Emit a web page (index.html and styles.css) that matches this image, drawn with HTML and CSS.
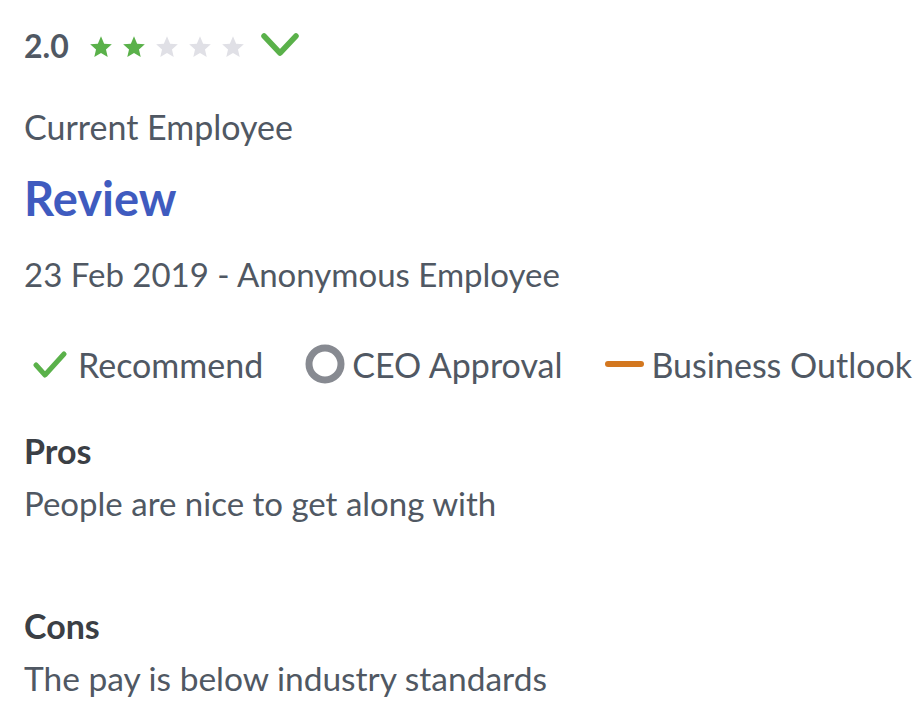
FILE: index.html
```html
<!DOCTYPE html>
<html>
<head>
<meta charset="utf-8">
<link rel="stylesheet" href="styles.css">
</head>
<body>
<div class="review">
  <div class="rating-row">
    <span class="score">2.0</span>
    <span class="stars">
      <svg class="star on" viewBox="0 0 24 24"><path d="M12 2l2.9 6.9 7.1.6-5.4 4.7 1.6 7.1L12 17.6 5.8 21.3l1.6-7.1L2 9.5l7.1-.6z"/></svg>
      <svg class="star on" viewBox="0 0 24 24"><path d="M12 2l2.9 6.9 7.1.6-5.4 4.7 1.6 7.1L12 17.6 5.8 21.3l1.6-7.1L2 9.5l7.1-.6z"/></svg>
      <svg class="star" viewBox="0 0 24 24"><path d="M12 2l2.9 6.9 7.1.6-5.4 4.7 1.6 7.1L12 17.6 5.8 21.3l1.6-7.1L2 9.5l7.1-.6z"/></svg>
      <svg class="star" viewBox="0 0 24 24"><path d="M12 2l2.9 6.9 7.1.6-5.4 4.7 1.6 7.1L12 17.6 5.8 21.3l1.6-7.1L2 9.5l7.1-.6z"/></svg>
      <svg class="star" viewBox="0 0 24 24"><path d="M12 2l2.9 6.9 7.1.6-5.4 4.7 1.6 7.1L12 17.6 5.8 21.3l1.6-7.1L2 9.5l7.1-.6z"/></svg>
    </span>
    <svg class="chevron" viewBox="0 0 38 23"><path d="M3 3l16 17L35 3" fill="none" stroke="#5ab14a" stroke-width="5.5" stroke-linecap="round" stroke-linejoin="round"/></svg>
  </div>
  <div class="status">Current Employee</div>
  <h2 class="title">Review</h2>
  <div class="meta">23 Feb 2019 - Anonymous Employee</div>
  <div class="indicators">
    <div class="ind">
      <svg class="ico-check" viewBox="0 0 34 27"><path d="M3 14l9 10L31 3" fill="none" stroke="#5ab14a" stroke-width="5" stroke-linecap="round" stroke-linejoin="round"/></svg>
      <span>Recommend</span>
    </div>
    <div class="ind">
      <svg class="ico-circle" viewBox="0 0 40 40"><circle cx="20" cy="20" r="16" fill="none" stroke="#878a91" stroke-width="7"/></svg>
      <span>CEO Approval</span>
    </div>
    <div class="ind">
      <svg class="ico-dash" viewBox="0 0 39 8"><path d="M3 4h33" stroke="#d3771f" stroke-width="6" stroke-linecap="round"/></svg>
      <span>Business Outlook</span>
    </div>
  </div>
  <div class="section">
    <h3>Pros</h3>
    <p>People are nice to get along with</p>
  </div>
  <div class="section">
    <h3>Cons</h3>
    <p class="wide">The pay is below industry standards</p>
  </div>
</div>
</body>
</html>
```
FILE: styles.css
```css
body {
  margin: 0;
  background: #fff;
  font-family: Lato, "Open Sans", sans-serif;
  color: #505863;
}
.review {
  padding: 25px 0 0 24px;
}
.rating-row {
  display: flex;
  align-items: center;
  height: 40px;
}
.score {
  font-weight: 700;
  font-size: 32px;
  color: #505863;
}
.stars {
  display: flex;
  gap: 7px;
  margin-left: 19px;
  margin-top: 4px;
}
.star {
  width: 26px;
  height: 26px;
  fill: #e0e0e6;
}
.star.on {
  fill: #5ab14a;
}
.chevron {
  width: 38px;
  height: 23px;
  margin-left: 15px;
  margin-top: -2px;
}
.status {
  font-size: 34px;
  line-height: 40px;
  margin-top: 42px;
}
.title {
  margin: 25px 0 0 0;
  font-size: 47px;
  font-weight: 700;
  color: #3f5bbf;
  line-height: 52px;
}
.meta {
  font-size: 33px;
  line-height: 40px;
  margin-top: 30px;
}
.indicators {
  display: flex;
  align-items: center;
  margin-top: 48px;
  height: 44px;
}
.ind {
  display: flex;
  align-items: center;
  font-size: 34px;
  margin-right: 42px;
  white-space: nowrap;
}
.ind:last-child { margin-right: 0; }
.ico-check {
  width: 34px;
  height: 27px;
  margin-left: 9px;
  margin-right: 11px;
}
.ico-circle {
  width: 40px;
  height: 40px;
  margin-right: 7px;
}
.ico-dash {
  width: 39px;
  height: 8px;
  margin-right: 8px;
}
.section {
  margin-top: 45px;
}
.section + .section {
  margin-top: 83px;
}
.section h3 {
  margin: 0;
  font-size: 34px;
  font-weight: 700;
  color: #3b3f45;
  line-height: 40px;
}
.section p {
  margin: 12px 0 0 0;
  font-size: 33px;
  line-height: 40px;
}
.section p.wide {
  font-size: 33.5px;
}
```
